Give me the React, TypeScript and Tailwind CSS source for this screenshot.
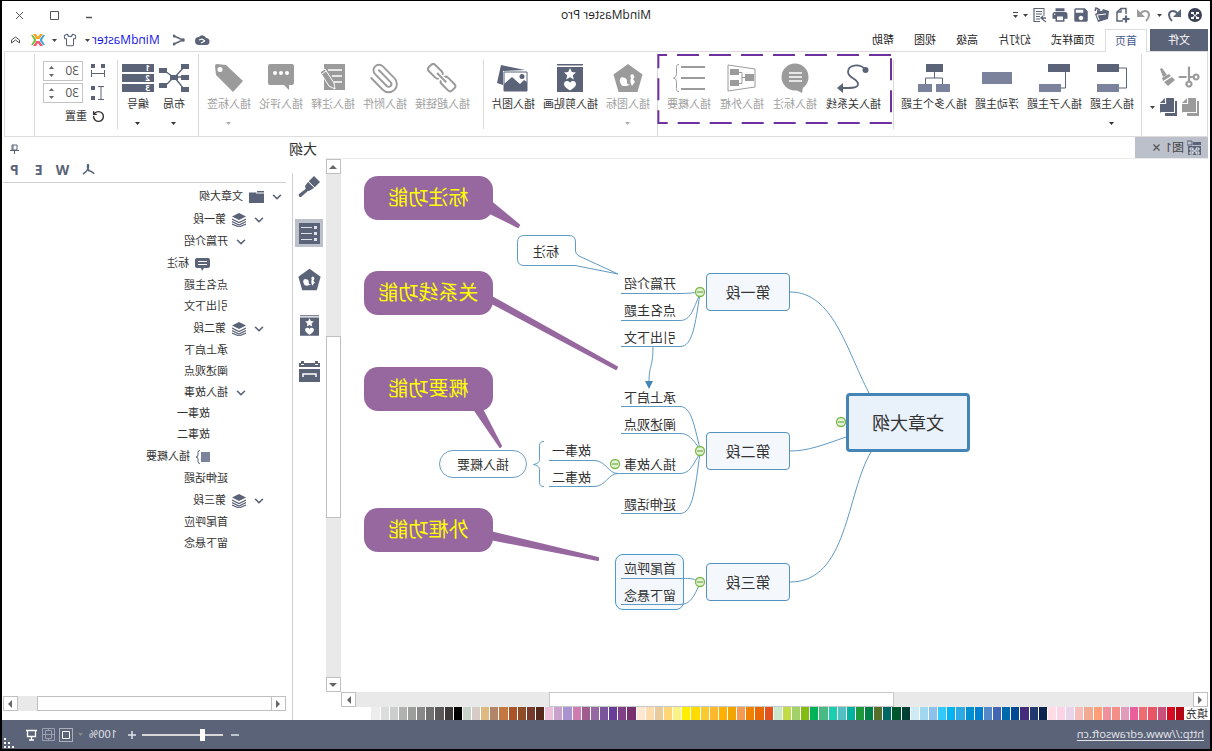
import type { ReactNode } from "react";
import clsx from "clsx";
import { ChevronDown, Paperclip, RotateCw, Scissors, Shirt } from "lucide-react";
import { MdPrint, MdSave } from "react-icons/md";

const DARK = "#5b6378";
const LIGHT = "#7b829b";
const GRAY = "#9b9b9b";
const LINE = "#5f9ac3";

/* ---------- shared bits ---------- */

function Caret({ className = "text-[#444]" }: { className?: string }) {
  return (
    <svg width="5" height="3" viewBox="0 0 5 3" className={className}>
      <path d="M0 0h5L2.5 3z" fill="currentColor" />
    </svg>
  );
}

function Svg({ w, h = 30, children }: { w: number; h?: number; children: ReactNode }) {
  return (
    <svg width={w} height={h} viewBox={`0 0 ${w} ${h}`} fill="none" className="shrink-0">
      {children}
    </svg>
  );
}

function Pentagon({ color, size = 30 }: { color: string; size?: number }) {
  return (
    <svg width={size} height={size} viewBox="0 0 30 30">
      <path d="M15 1l14.5 10.5L24.500 29h-19L.5 11.500z" fill={color} />
      <path d="M18 15c3-2 6 0 5 4-1 3-2 4-4 4s-5 0-6-2c2 1 3 0 3-2s0-3 2-4z" fill="#fff" />
      <path d="M11 11c2 1 2 3 1 4 1 2 1 5-1 8-1-2-2-3-3-4l2-3c-2-1-2-4 1-5z" fill="#fff" />
    </svg>
  );
}

function ClipArt({ w = 26, h = 30 }: { w?: number; h?: number }) {
  return (
    <svg width={w} height={h} viewBox="0 0 26 30">
      <path d="M0 1h26v1.500H0zM0 4h26v25H0z" fill={DARK} />
      <path d="M13 5l1.800 4 4.200.4-3.200 2.800 1 4.300-3.800-2.300-3.800 2.300 1-4.300L7 9.400l4.200-.4z" fill="#fff" />
      <path d="M13 27.500c-3-2-6-4-6-6.500 0-3.500 4.500-4 6-1.300 1.500-2.700 6-2.200 6 1.300 0 2.500-3 4.500-6 6.500z" fill="#fff" />
    </svg>
  );
}

function Pages({ color }: { color: string }) {
  return (
    <Svg w={18} h={20}>
      <path d="M0 4h2v12h10v3H0z" fill={color} />
      <path d="M3 1h9l5 5v10" fill={color} />
      <path d="M3 1v14h14V6z" fill={color} />
      <path d="M11.500 1v5.500H17" stroke="#fff" strokeWidth="1.200" />
    </Svg>
  );
}

/* ---------- title bar ---------- */

function TitleBar() {
  return (
    <header className="grid h-7 grid-cols-[1fr_auto_1fr] items-center text-[12px] text-[#222]">
      <div className="flex items-center pl-2 text-[#5b6378]">
        <svg width="14" height="14" viewBox="0 0 14 14" className="mr-[6px]">
          <circle cx="7" cy="7" r="7" fill="#3c4255" />
          <path d="M3 4h3v2H3zM8 4h3v2H8zM3 9h3v2H3zM8 9h3v2H8z" fill="#fff" />
          <path d="M4 5l6 5M10 5l-6 5" stroke="#fff" />
        </svg>
        <button aria-label="撤销">
          <Svg w={15} h={14}>
            <path d="M1 1v8h8z" fill={DARK} />
            <path d="M4 6c4-5 9-3 9 1 0 3-1 4-3 6" stroke={DARK} strokeWidth="2" />
          </Svg>
        </button>
        <button aria-label="撤销列表" className="ml-[5px]"><Caret /></button>
        <button aria-label="恢复" className="ml-[6px]">
          <Svg w={15} h={14}>
            <path d="M14 1v8H6z" fill={GRAY} />
            <path d="M11 6C7 1 2 3 2 7c0 3 1 4 3 6" stroke={GRAY} strokeWidth="2" />
          </Svg>
        </button>
        <button aria-label="新建" className="ml-[5px]">
          <Svg w={16} h={16}>
            <path d="M5 7V1.500h5L14 5v9H8" stroke={DARK} strokeWidth="1.500" />
            <path d="M10 1.500V5h4" stroke={DARK} strokeWidth="1.300" />
            <path d="M5 8.500v7M1.500 12h7" stroke={DARK} strokeWidth="2.200" />
          </Svg>
        </button>
        <button aria-label="打开" className="ml-[5px]">
          <Svg w={16} h={16}>
            <path d="M1 4l6-2 1 2 5-1v3l2 1-3 8-10-3z" fill={DARK} />
            <path d="M4 7l9 1-2 5" stroke="#fff" />
            <path d="M10 3l4-2 1 3" stroke={DARK} strokeWidth="1.500" />
          </Svg>
        </button>
        <button aria-label="保存" className="ml-1"><MdSave size={18} className="-scale-x-100" /></button>
        <button aria-label="打印" className="ml-[3px]"><MdPrint size={18} /></button>
        <button aria-label="导出" className="ml-[5px]">
          <Svg w={14} h={16}>
            <path d="M2 1.500h10v13H6" stroke={DARK} strokeWidth="1.200" />
            <path d="M2 1v8M4 4.500h6M4 7h6M6 9.500h4M6 12h4" stroke={DARK} />
            <path d="M0 11h5M3 9l2 2-5 4" stroke={DARK} strokeWidth="1.300" />
          </Svg>
        </button>
        <button aria-label="更多" className="ml-1"><Caret /></button>
        <button aria-label="自定义" className="ml-[5px] flex flex-col items-center gap-[2px]">
          <span className="h-px w-[5px] bg-[#444]" />
          <Caret />
        </button>
      </div>
      <h1>MindMaster Pro</h1>
      <div className="flex items-center justify-end gap-[26px] pr-[13px] text-[#555]">
        <button aria-label="最小化"><Svg w={8} h={8}><path d="M1 6.500h6" stroke="#555" strokeWidth="1.500" /></Svg></button>
        <button aria-label="最大化"><Svg w={9} h={9}><path d="M.5.5h8v8h-8z" stroke="#555" /></Svg></button>
        <button aria-label="关闭"><Svg w={9} h={9}><path d="M1 1l7 7M8 1L1 8" stroke="#555" /></Svg></button>
      </div>
    </header>
  );
}

const menuTabs = ["页面样式", "幻灯片", "高级", "视图", "帮助"];

function TabRow() {
  return (
    <nav className="flex h-[22px] items-stretch px-[2px] text-[11px] text-[#222]">
      <button className="w-[58px] bg-[#5b6378] text-white">文件</button>
      <button className="relative z-10 -mb-px ml-[3px] border border-b-0 border-[#dcdcdc] bg-white px-[9px] text-[#46588c]">
        首页
      </button>
      {menuTabs.map((tab) => (
        <button key={tab} className="px-[10px]">{tab}</button>
      ))}
      <div className="ml-auto flex items-center pr-[7px]">
        <Svg w={15} h={12}>
          <path d="M4 11a3.500 3.500 0 010-7 4 4 0 017-1 4 4 0 010 8z" fill={DARK} />
          <path d="M5 7l3-2M5 7l4 2M8 5l3 1" stroke="#fff" strokeWidth="1.200" />
        </Svg>
        <span className="ml-[10px]">
          <Svg w={12} h={12}>
            <path d="M1 2l9 4-9 4" stroke={DARK} strokeWidth="1.500" className="-scale-x-100 origin-center" />
            <circle cx="11" cy="2" r="1.500" fill={DARK} />
            <circle cx="2" cy="6" r="1.800" fill={DARK} />
            <circle cx="11" cy="10" r="1.500" fill={DARK} />
          </Svg>
        </span>
        <button className="ml-[13px] flex items-center gap-[2px] text-[12px] text-[#1414e6]">
          MindMaster <Caret />
        </button>
        <button aria-label="主题" className="ml-2 flex items-center gap-[6px] text-[#5b6378]">
          <Shirt size={14} strokeWidth={1.800} /> <Caret />
        </button>
        <span className="ml-[7px]">
          <Svg w={14} h={14}>
            <path d="M2 1h3l2 3 2-3h3L8.500 6h-3z" fill="#f5a623" />
            <path d="M2 13h3l2-3 2 3h3L8.500 8h-3z" fill="#f0566e" />
            <path d="M0 2h2l3 4v2l-3 4H0l3-5z" fill="#3fa7e0" />
            <path d="M14 2h-2L9 6v2l3 4h2l-3-5z" fill="#7ac143" />
          </Svg>
        </span>
        <button aria-label="收起功能区" className="ml-[11px]">
          <Svg w={9} h={8}>
            <path d="M.5 4l4-3 4 3v3l-4-3-4 3z" stroke="#555" />
          </Svg>
        </button>
      </div>
    </nav>
  );
}

/* ---------- ribbon ---------- */

interface ToolProps {
  label: string;
  disabled?: boolean;
  menu?: boolean;
  children: ReactNode;
}

function Tool({ label, disabled, menu, children }: ToolProps) {
  return (
    <button
      disabled={disabled}
      className={clsx(
        "flex flex-col items-center whitespace-nowrap text-[11px] leading-4",
        disabled ? "text-[#a0a0a0]" : "text-[#333]"
      )}
    >
      <span className="flex h-[30px] items-center justify-center">{children}</span>
      <span className="mt-[3px]">{label}</span>
      {menu && <span className="mt-[10px]"><Caret className={disabled ? "text-[#b0b0b0]" : "text-[#333]"} /></span>}
    </button>
  );
}

function Divider({ full }: { full?: boolean }) {
  return <div className={clsx("w-px shrink-0 bg-[#d9d9d9]", full ? "-mt-[9px] h-[82px]" : "-mt-[3px] h-[69px]")} />;
}

function Spin({ id, label }: { id: string; label: string }) {
  return (
    <span className="flex h-5 w-[40px] items-center border border-[#c4c4c4]">
      <input id={id} aria-label={label} defaultValue="30" className="w-[28px] pl-[3px] text-[12px] text-[#555] outline-none" />
      <span className="flex flex-col gap-[5px]">
        <Svg w={5} h={3}><path d="M0 3h5L2.500 0z" fill="#666" /></Svg>
        <Svg w={5} h={3}><path d="M0 0h5L2.500 3z" fill="#666" /></Svg>
      </span>
    </span>
  );
}

function Ribbon() {
  return (
    <section className="mx-[2px] flex h-[86px] items-start border border-[#dcdcdc] pt-[11px]">
      <div className="grid w-[65px] shrink-0 grid-cols-[22px_32px] gap-y-[10px] pl-2 pt-1">
        <button aria-label="剪切"><Scissors size={20} strokeWidth={2.600} color={GRAY} className="-rotate-45" /></button>
        <button aria-label="格式刷">
          <Svg w={18} h={20}>
            <path d="M15 1l2 1-3 8-4-2z" fill={GRAY} />
            <path d="M8 7l7 4-1 3-8-5z" fill={GRAY} />
            <path d="M5 10l8 5-4 4-7-6z" fill={GRAY} />
          </Svg>
        </button>
        <button aria-label="复制"><Pages color={GRAY} /></button>
        <button aria-label="粘贴" className="flex items-center gap-1">
          <Pages color={DARK} />
          <Caret />
        </button>
      </div>
      <Divider full />

      <div className="flex gap-2 px-[7px]">
        <Tool label="插入主题" menu>
          <Svg w={31}>
            <path d="M8 5H.5v20H8" stroke={DARK} />
            <path d="M8 1h22v8H8z" fill={DARK} />
            <path d="M8 21h22v8H8z" fill={LIGHT} />
          </Svg>
        </Tool>
        <Tool label="插入子主题">
          <Svg w={31}>
            <path d="M4.500 9v16H9" stroke={DARK} />
            <path d="M0 1h22v8H0z" fill={DARK} />
            <path d="M9 21h22v8H9z" fill={LIGHT} />
          </Svg>
        </Tool>
        <Tool label="浮动主题">
          <Svg w={30}><path d="M0 9h30v12H0z" fill={LIGHT} /></Svg>
        </Tool>
        <Tool label="插入多个主题">
          <Svg w={32}>
            <path d="M15.500 9v6M7.500 21v-6h17v6" stroke={DARK} />
            <path d="M7 1h17v8H7z" fill={DARK} />
            <path d="M0 21h14v8H0zM18 21h14v8H18z" fill={LIGHT} />
          </Svg>
        </Tool>
      </div>
      <Divider />

      {/* highlighted tools */}
      <div className="relative flex gap-[9px] pl-[12px] pr-[9px]">
        <svg className="pointer-events-none absolute -top-[9px] left-px h-[70px] w-full overflow-visible">
          <rect x="1" y="1" width="99%" height="68" fill="none" stroke="#7030a0" strokeWidth="2" strokeDasharray="22 10" />
        </svg>
        <Tool label="插入关系线">
          <Svg w={32}>
            <circle cx="3.500" cy="7" r="3" fill={DARK} />
            <path d="M4 6C10 0 21 2 21 9c0 6-10 7-10 12 0 4 6 4 15 4" stroke={DARK} strokeWidth="1.800" />
            <path d="M26 20l6 5-6 5z" fill={DARK} />
          </Svg>
        </Tool>
        <Tool label="插入标注" disabled>
          <Svg w={28}>
            <circle cx="14" cy="14" r="13.500" fill={GRAY} />
            <path d="M6 24l1 6 8-4z" fill={GRAY} />
            <path d="M7 10h13M7 14h13M7 18h13" stroke="#fff" strokeWidth="1.300" />
          </Svg>
        </Tool>
        <Tool label="插入外框" disabled>
          <Svg w={29}>
            <path d="M1 6l27-4v26L1 24z" stroke={GRAY} />
            <path d="M2 11h9v7H2zM17 6h9v6h-9zM17 17h9v6h-9z" fill={GRAY} />
            <path d="M11 14.500h3M17 9.500h-3v11h3" stroke={GRAY} />
          </Svg>
        </Tool>
        <Tool label="插入概要" disabled>
          <Svg w={32}>
            <path d="M0 4h24M0 15h24M0 26h24" stroke={GRAY} strokeWidth="2" />
            <path d="M26 1.500c2 0 2.500 1 2.500 3v6c0 3 1 4 3 4.500-2 .5-3 1.500-3 4.500v6c0 2-.5 3-2.500 3" stroke={GRAY} />
          </Svg>
        </Tool>
      </div>
      <Divider full />

      <div className="flex gap-2 px-[7px]">
        <Tool label="插入图标" disabled menu><Pentagon color={GRAY} /></Tool>
        <Tool label="插入剪贴画"><ClipArt /></Tool>
        <Tool label="插入图片">
          <Svg w={31}>
            <path d="M3 7l24-5 4 18-6 2V8z" fill={DARK} />
            <path d="M1 9h23v19H1z" fill="#fff" stroke={DARK} />
            <path d="M1 28v-9l3-2 4 4 8-7 8 7v7z" fill={DARK} />
            <circle cx="6" cy="13.500" r="2.500" fill={DARK} />
          </Svg>
        </Tool>
      </div>
      <Divider />

      <div className="flex gap-2 pl-[13px] pr-2">
        <Tool label="插入超链接" disabled>
          <Svg w={30}>
            <g transform="rotate(-45 15 15)" stroke={GRAY} strokeWidth="2">
              <rect x="-1" y="10.500" width="15" height="9" rx="3" />
              <rect x="17" y="10.500" width="15" height="9" rx="3" />
              <path d="M10 15h11" stroke="#fff" strokeWidth="5" />
              <path d="M9 15h13" />
            </g>
          </Svg>
        </Tool>
        <Tool label="插入附件" disabled><Paperclip size={33} strokeWidth={1.400} color={GRAY} /></Tool>
        <Tool label="插入注释" disabled>
          <Svg w={27}>
            <path d="M1 1h21v26H1z" fill={GRAY} />
            <path d="M4 7h14M4 13h10M4 19h8" stroke="#fff" strokeWidth="1.500" />
            <path d="M11 26l1-6 9-14 5 3-9 14z" fill={GRAY} stroke="#fff" />
            <path d="M20 8l4 3" stroke="#fff" />
          </Svg>
        </Tool>
        <Tool label="插入评论" disabled>
          <Svg w={26}>
            <path d="M2 1h22a2 2 0 012 2v17a2 2 0 01-2 2H10l-5 5v-5H2a2 2 0 01-2-2V3a2 2 0 012-2z" fill={GRAY} />
            <circle cx="7" cy="10" r="2" fill="#fff" />
            <circle cx="13" cy="10" r="2" fill="#fff" />
            <circle cx="19" cy="10" r="2" fill="#fff" />
          </Svg>
        </Tool>
        <Tool label="插入标签" disabled menu>
          <Svg w={30}>
            <path d="M18 2l9-1a2 2 0 012 2l-1 9L11 29 1 18z" fill={GRAY} />
            <circle cx="24" cy="6.500" r="2.500" fill="#fff" />
          </Svg>
        </Tool>
      </div>
      <Divider full />

      <div className="flex gap-[5px] pl-[9px] pr-1">
        <Tool label="布局" menu>
          <Svg w={30}>
            <path d="M5 4l9 10M4 14h12M5 26l9-11M24 8l-8 6M24 23l-8-8" stroke={DARK} strokeWidth="1.300" />
            <path d="M0 1h8v5H0zM0 12h8v5H0zM0 24h8v5H0zM11 12h8v5h-8zM22 5h8v5h-8zM22 20h8v5h-8z" fill={DARK} />
          </Svg>
        </Tool>
        <Tool label="编号" menu>
          <span className="flex w-8 flex-col gap-[2px] text-left text-[8px] leading-2 font-bold text-white">
            {[1, 2, 3].map((n) => (
              <span key={n} className="h-2 bg-[#5b6378] pl-1">{n}</span>
            ))}
          </span>
        </Tool>
      </div>
      <Divider />

      <div className="-mt-[2px] flex flex-col gap-[2px] pl-3 pr-2 text-[11px] text-[#333]">
        <label className="flex items-center gap-2">
          <Svg w={14} h={14}>
            <path d="M0 0h4v4H0zM10 0h4v4h-4z" fill={DARK} />
            <path d="M.5 6v7M13.500 6v7M1 9.500h12" stroke={DARK} />
          </Svg>
          <Spin id="gap-x" label="水平间距" />
        </label>
        <label className="flex items-center gap-2">
          <Svg w={14} h={14}>
            <path d="M10 0h4v4h-4zM10 10h4v4h-4z" fill={DARK} />
            <path d="M1 .5h6M1 13.500h6M4 1v12" stroke={DARK} />
          </Svg>
          <Spin id="gap-y" label="垂直间距" />
        </label>
        <button className="flex items-center gap-[5px] pt-[3px]">
          <RotateCw size={13} strokeWidth={2.600} /> 重置
        </button>
      </div>
      <Divider full />
    </section>
  );
}

/* ---------- canvas ---------- */

const leaves = [
  { text: "开篇介绍", top: 114 },
  { text: "点名主题", top: 141 },
  { text: "引出下文", top: 168 },
  { text: "承上启下", top: 228 },
  { text: "阐述观点", top: 255 },
  { text: "插入故事", top: 295 },
  { text: "延伸话题", top: 335 },
  { text: "首尾呼应", top: 399 },
  { text: "留下悬念", top: 426 },
];

const branches = [
  { text: "第一段", top: 114 },
  { text: "第二段", top: 273 },
  { text: "第三段", top: 404 },
];

const bubbles = [
  { text: "标注功能", top: 17 },
  { text: "关系线功能", top: 112 },
  { text: "概要功能", top: 208 },
  { text: "外框功能", top: 349 },
];

const handles = [[367, 263], [508, 133], [508, 292], [508, 423], [593, 305]];

function MindMap() {
  return (
    <div className="relative min-h-[533px] flex-1 overflow-hidden bg-white text-[13px] leading-5 text-[#333]">
      <div className="absolute left-[524px] top-[395px] h-[56px] w-[69px] rounded-[8px] border border-[#4a9bd0] bg-[#f4f8fd]" />
      <svg width="867" height="533" viewBox="0 0 867 533" className="absolute left-0 top-0" fill="none">
        <g stroke={LINE}>
          <path d="M418 133C375 133 362 190 339 234" />
          <path d="M418 292C400 292 385 286 362 278" />
          <path d="M418 423C360 423 362 335 337 293" />
          <path d="M508 133C516 134 520 134.500 528 134.500H587" />
          <path d="M508 135C515 150 517 161.500 528 161.500H587" />
          <path d="M508 135C513 165 515 187.500 528 187.500H587" />
          <path d="M508 290C514 265 517 247.500 528 247.500H587" />
          <path d="M508 290C516 280 519 274.500 528 274.500H587" />
          <path d="M508 294C516 308 519 314.500 528 314.500H590C600 314.500 602 301.500 614 301.500H659" />
          <path d="M590 314.500C600 314.500 602 327.500 614 327.500H659" />
          <path d="M508 294C513 330 515 354.500 528 354.500H587" />
          <path d="M508 423C516 418.500 520 419.500 528 419.500H587" />
          <path d="M508 424C514 438 518 445.500 528 445.500H587" />
          <path d="M664 282.500q4.500 0 4.500 4v14q0 4 6 5q-6 1-6 5v13q0 4-4.500 4" />
          <path d="M555 187C555 210 559 205 559 223" />
          <path d="M639 76.500H684q6.500 0 6.500 7V100q0 6.500-6.500 6.500H633L590 115L629 97q3.500-2 3.500-5V83q0-6.500 6.500-6.500z" />
        </g>
        <path d="M555 222h8l-4 8z" fill="#4585b5" />
        {/* bubble tails */}
        <g fill="#97689f" stroke="#97689f" strokeWidth="2" strokeLinejoin="round">
          <path d="M718 42V54L690 68L689 66z" />
          <path d="M718 137V143L592 210L591 208z" />
          <path d="M734 250H726L707 287L708 288z" />
          <path d="M718 373V380L610 401V399z" />
        </g>
        {handles.map(([x, y]) => (
          <g key={`${x}-${y}`}>
            <circle cx={x} cy={y} r="4.500" fill="#e3f2d3" stroke="#79b84a" strokeWidth="1.300" />
            <path d={`M${x - 3} ${y}h6`} stroke="#5d9c34" />
          </g>
        ))}
      </svg>

      <div className="absolute left-[238px] top-[234px] flex h-[59px] w-[124px] items-center justify-center rounded-[4px] border-3 border-[#4585b5] bg-[#e9f1fb] text-[18px]">
        文章大纲
      </div>
      {branches.map((b) => (
        <div
          key={b.text}
          style={{ top: b.top }}
          className="absolute left-[418px] flex h-[38px] w-[84px] items-center justify-center rounded-[4px] border border-[#5592be] bg-[#f4f8fd] text-[15px]"
        >
          {b.text}
        </div>
      ))}
      {leaves.map((leaf) => (
        <div key={leaf.text} style={{ top: leaf.top }} className="absolute left-[532px] whitespace-nowrap">
          {leaf.text}
        </div>
      ))}
      <div className="absolute left-[617px] top-[281px]">故事一</div>
      <div className="absolute left-[617px] top-[308px]">故事二</div>
      <div className="absolute left-[649px] top-[82px]">标注</div>
      <div className="absolute left-[681px] top-[291px] flex h-[28px] w-[88px] items-center justify-center rounded-full border border-[#6ba0c6]">
        插入概要
      </div>
      {bubbles.map((b) => (
        <div
          key={b.text}
          style={{ top: b.top }}
          className="absolute left-[715px] flex h-[44px] w-[129px] items-center justify-center rounded-[14px] bg-[#97689f] pb-px text-[20px] text-[#ffff00]"
        >
          {b.text}
        </div>
      ))}
    </div>
  );
}

const swatches = [
  "#b40615", "#d60a20", "#c9507a", "#e85566", "#ef6c72", "#e85f9b", "#e29bbb", "#f48f88", "#f0909d", "#ff9f7a",
  "#f0aa92", "#f7bdbb", "#e9d4ea", "#fdd3e6", "#ffdde6", "#0c2350", "#203a70", "#432d7a", "#004a94", "#0069ac",
  "#4266b4", "#5688c8", "#0080d0", "#0090d2", "#2caae4", "#00b4f4", "#33c8fa", "#8ac2ec", "#a0d8f0", "#cdeaf5",
  "#004035", "#00562c", "#006864", "#566f2a", "#008048", "#1e983a", "#00b2a0", "#52c0c0", "#1cceb0", "#4aba84",
  "#00b258", "#82bc10", "#a2d06a", "#c0dc44", "#cce8cc", "#e25020", "#ea6800", "#f08200", "#f59a52", "#f2a400",
  "#ffb000", "#feb830", "#facb30", "#ffdb00", "#ffee00", "#faf282", "#ffd575", "#e8cc9c", "#ffdcb0", "#ffe8d2",
  "#76306e", "#804088", "#683e98", "#7a559c", "#9668a4", "#9f5c8c", "#cf7cb2", "#a892d0", "#c8a2ca", "#ecc0dc",
  "#552a1c", "#753a2c", "#8f4c28", "#aa5428", "#c27840", "#b2846a", "#dfb982", "#d6cbc6", "#c8d2c8", "#000000",
  "#3e3838", "#5a5858", "#707070", "#888888", "#9c9e9c", "#b0b2b0", "#cccdcd", "#dcdcdc", "#ededed",
];

const arrows = {
  up: "M0 6h8L4 2z",
  down: "M0 2h8L4 6z",
  left: "M6 0v8L2 4z",
  right: "M2 0v8l4-4z",
};

function ScrollButton({ dir }: { dir: keyof typeof arrows }) {
  return (
    <button aria-label={dir} className="flex size-[15px] shrink-0 items-center justify-center border border-[#c0c0c0] bg-white">
      <svg width="8" height="8" viewBox="0 0 8 8">
        <path d={arrows[dir]} fill="#666" />
      </svg>
    </button>
  );
}

function Workspace() {
  return (
    <section className="flex min-w-0 flex-1 flex-col">
      <div className="flex h-[22px] border-b border-[#ececec]">
        <div className="flex w-[73px] items-center bg-[#bcc0cb] pl-[6px] text-[12px] text-[#444]">
          <Svg w={15} h={15}>
            <path d="M1 2h8v3H1zM3 6h11v9H1V6z" fill={DARK} />
            <path d="M10 1h5v4h-5z" stroke={DARK} />
            <path d="M3 8h3v2H3zM9 8h3v2H9zM3 12h3v2H3zM9 12h3v2H9zM5 9l5 4M10 9l-5 4" stroke="#dfe2ea" />
          </Svg>
          <span className="ml-[3px]">图1</span>
          <button aria-label="关闭图1" className="ml-[5px]">
            <Svg w={7} h={7}><path d="M.5.5l6 6M6.500.5l-6 6" stroke="#555" strokeWidth="1.300" /></Svg>
          </button>
        </div>
      </div>
      <div className="flex flex-1">
        <MindMap />
        <div className="flex w-[15px] flex-col bg-[#e9e9e9]">
          <ScrollButton dir="up" />
          <div className="flex-[163]" />
          <div className="flex-[180] border border-[#c0c0c0] bg-white" />
          <div className="flex-[160]" />
          <ScrollButton dir="down" />
        </div>
      </div>
      <div className="mr-[15px] flex h-[15px] bg-[#e9e9e9]">
        <ScrollButton dir="left" />
        <div className="flex-[300]" />
        <div className="flex-[344] border border-[#c8c8c8] bg-white" />
        <div className="flex-[193]" />
        <ScrollButton dir="right" />
      </div>
      <div className="flex h-[13px] items-stretch text-[11px] leading-[13px] text-[#333]">
        <span className="w-6">填充</span>
        <div className="mr-[44px] flex flex-1">
          {swatches.map((color) => (
            <button key={color} aria-label={color} style={{ backgroundColor: color }} className="min-w-0 flex-1 border-r border-white" />
          ))}
        </div>
      </div>
    </section>
  );
}

/* ---------- outline panel ---------- */

const rowIcons = {
  folder: (
    <Svg w={15} h={14}>
      <path d="M0 1h7v1.500h8V13H0z" fill={DARK} />
      <path d="M0 3h8" stroke="#fff" />
    </Svg>
  ),
  layers: (
    <Svg w={14} h={14}>
      <path d="M7 0l7 3.500L7 7 0 3.500z" fill={DARK} />
      <path d="M0 6l7 3.500L14 6M0 8.500L7 12l7-3.500M0 11l7 3 7-3" stroke={DARK} strokeWidth="1.200" />
    </Svg>
  ),
  note: (
    <Svg w={15} h={14}>
      <path d="M2 1h11a2 2 0 012 2v6a2 2 0 01-2 2H9l-1 3-2-3H2a2 2 0 01-2-2V3a2 2 0 012-2z" fill={DARK} />
      <path d="M3 4.500h9M3 7.500h9" stroke="#fff" />
    </Svg>
  ),
  summary: (
    <Svg w={14} h={14}>
      <path d="M0 2h9v10H0z" fill={LIGHT} />
      <path d="M10 .5q2 0 2 2v2.500q0 2 2 2q-2 0-2 2v2.500q0 2-2 2" stroke={DARK} />
    </Svg>
  ),
};

interface OutlineRow {
  text: string;
  level: number;
  open?: boolean;
  icon?: keyof typeof rowIcons;
}

const outline: OutlineRow[] = [
  { text: "文章大纲", level: 0, open: true, icon: "folder" },
  { text: "第一段", level: 1, open: true, icon: "layers" },
  { text: "开篇介绍", level: 2, open: true },
  { text: "标注", level: 3, icon: "note" },
  { text: "点名主题", level: 2 },
  { text: "引出下文", level: 2 },
  { text: "第二段", level: 1, open: true, icon: "layers" },
  { text: "承上启下", level: 2 },
  { text: "阐述观点", level: 2 },
  { text: "插入故事", level: 2, open: true },
  { text: "故事一", level: 3 },
  { text: "故事二", level: 3 },
  { text: "插入概要", level: 3, icon: "summary" },
  { text: "延伸话题", level: 2 },
  { text: "第三段", level: 1, open: true, icon: "layers" },
  { text: "首尾呼应", level: 2 },
  { text: "留下悬念", level: 2 },
];

const indents = ["pl-[2px]", "pl-[20px]", "pl-[38px]", "pl-[56px]"];

const sideTools = [
  {
    label: "格式",
    icon: (
      <Svg w={22} h={22}>
        <path d="M6 0l6 6-6 6-6-6z" fill={DARK} />
        <path d="M12 6l3 4-1 4-3 1-5-3z" fill={DARK} />
        <path d="M13 12l8 6a2 2 0 01-2 3l-8-7z" fill={DARK} />
        <path d="M12 5l-7 7" stroke="#fff" />
      </Svg>
    ),
  },
  {
    label: "大纲",
    icon: (
      <Svg w={21} h={21}>
        <path d="M0 0h21v21H0z" fill={DARK} />
        <path d="M3 3h3v3H3zM3 9h3v3H3zM3 15h3v3H3z" fill="#dfe2ea" />
        <path d="M8 4.500h11M8 10.500h11M8 16.500h11" stroke="#dfe2ea" />
      </Svg>
    ),
  },
  { label: "图标", icon: <Pentagon color={DARK} size={23} /> },
  { label: "剪贴画", icon: <ClipArt w={19} h={23} /> },
  {
    label: "任务",
    icon: (
      <Svg w={21} h={22}>
        <path d="M0 3h2v2h3V3h11v2h3V3h2v4H0zM0 9h21v13H0z" fill={DARK} />
        <path d="M2 1h3v3H2zM16 1h3v3h-3z" fill={DARK} />
        <path d="M4 17v-3h13v3" stroke="#fff" strokeWidth="1.500" />
      </Svg>
    ),
  },
];

function OutlinePanel() {
  return (
    <aside className="flex w-[324px] shrink-0 flex-col">
      <div className="flex h-[23px] items-center justify-between pl-[9px] pr-2">
        <h2 className="text-[14px] text-[#333]">大纲</h2>
        <button aria-label="固定">
          <Svg w={9} h={10}>
            <path d="M2 1h5v5H2zM6 1v5M0 6.500h9M4.500 7v3" stroke={DARK} />
          </Svg>
        </button>
      </div>
      <div className="flex flex-1">
        <div className="mt-[13px] flex w-[34px] flex-col items-center gap-[18px] border-r border-[#d0d0d0]">
          {sideTools.map((tool) => (
            <button
              key={tool.label}
              aria-label={tool.label}
              className={clsx("flex size-7 items-center justify-center", tool.label === "大纲" && "bg-[#bcc0cb]")}
            >
              {tool.icon}
            </button>
          ))}
        </div>
        <div className="ml-[6px] mr-px flex flex-1 flex-col">
          <div className="flex h-[23px] items-center justify-end gap-[13px] border-b border-[#d0d0d0] pb-[3px] pr-[7px] text-[14px] font-bold text-[#5b6378]">
            <button aria-label="导出 PDF">
              <Svg w={13} h={13}>
                <path d="M7 1c-1 2 0 5 1 6.500M7 1c1 2 0 5-1 6.500M1 11c1-2 3-3 6-3.500M12 11c-2-1-4-3-5-5" stroke={DARK} strokeWidth="1.500" />
              </Svg>
            </button>
            <button>W</button>
            <button>E</button>
            <button className="ml-[3px]">P</button>
          </div>
          <ul className="flex-1 pt-[2px] text-[11px] text-[#333]">
            {outline.map((row) => (
              <li key={row.text} className={clsx("flex items-center gap-[6px]", indents[row.level], row.icon ? "h-[23px]" : "h-[21px]")}>
                <span className="w-[14px] text-[#5b6378]">{row.open && <ChevronDown size={14} strokeWidth={2.800} />}</span>
                {row.icon && rowIcons[row.icon]}
                <span className="whitespace-nowrap">{row.text}</span>
              </li>
            ))}
          </ul>
          <div className="mb-[9px] flex bg-[#e9e9e9]">
            <ScrollButton dir="left" />
            <div className="flex-1 border border-l-0 border-[#c0c0c0] bg-white" />
            <div className="w-[19px]" />
            <ScrollButton dir="right" />
          </div>
        </div>
      </div>
    </aside>
  );
}

/* ---------- status bar ---------- */

function StatusBar() {
  return (
    <footer className="flex h-[29px] items-center bg-[#5b6378] pl-[6px] text-[11px] text-[#e4e6ec]">
      <a href="http://www.edrawsoft.cn" className="underline underline-offset-2">http://www.edrawsoft.cn</a>
      <div className="ml-auto flex items-center">
        <button aria-label="缩小"><Svg w={8} h={8}><path d="M0 4h8" stroke="#dfe2ea" strokeWidth="1.500" /></Svg></button>
        <input
          type="range"
          aria-label="缩放"
          defaultValue={23}
          className="ml-2 mr-[6px] h-3 w-[81px] appearance-none bg-[linear-gradient(#d8d8d8,#d8d8d8)] bg-[length:100%_2px] bg-center bg-no-repeat [&::-webkit-slider-thumb]:h-3 [&::-webkit-slider-thumb]:w-[5px] [&::-webkit-slider-thumb]:appearance-none [&::-webkit-slider-thumb]:bg-white"
        />
        <button aria-label="放大"><Svg w={8} h={8}><path d="M0 4h8M4 0v8" stroke="#dfe2ea" strokeWidth="1.500" /></Svg></button>
        <button className="ml-[11px] flex items-center gap-[6px]">
          100% <Caret className="text-[#888]" />
        </button>
        <button aria-label="适合页面" className="ml-[5px]">
          <Svg w={14} h={14}>
            <path d="M.5.5h13v13H.5z" stroke="#fff" strokeDasharray="1 1" />
            <path d="M3.500 3.500h7v7h-7z" stroke="#fff" />
          </Svg>
        </button>
        <button aria-label="居中" className="ml-1">
          <Svg w={13} h={13}>
            <path d="M.5.5h12v12H.5zM3.500 2.500h6v8h-6zM1 6.500h11M6.500 1v2M6.500 10v2" stroke="#9aa0b2" />
          </Svg>
        </button>
        <button aria-label="演示" className="ml-[5px]">
          <Svg w={11} h={12}>
            <path d="M0 1.500h11M1.500 2v5.500h8V2M5.500 7v4M3 11h5" stroke="#fff" strokeWidth="1.300" />
          </Svg>
        </button>
        <span className="ml-3 mt-[18px]">
          <Svg w={12} h={11}>
            <path d="M8 0h2v2H8zM8 4h2v2H8zM4 4h2v2H4zM8 8h2v2H8zM4 8h2v2H4zM0 8h2v2H0z" fill="#fff" />
          </Svg>
        </span>
      </div>
    </footer>
  );
}

export default function App() {
  return (
    <div className="flex min-h-screen -scale-x-100 flex-col border-x-2 border-b-2 border-t border-black bg-white font-['Open_Sans','Noto_Sans_CJK_SC',sans-serif]">
      <TitleBar />
      <TabRow />
      <Ribbon />
      <main className="flex flex-1 pl-[2px]">
        <Workspace />
        <OutlinePanel />
      </main>
      <StatusBar />
    </div>
  );
}
